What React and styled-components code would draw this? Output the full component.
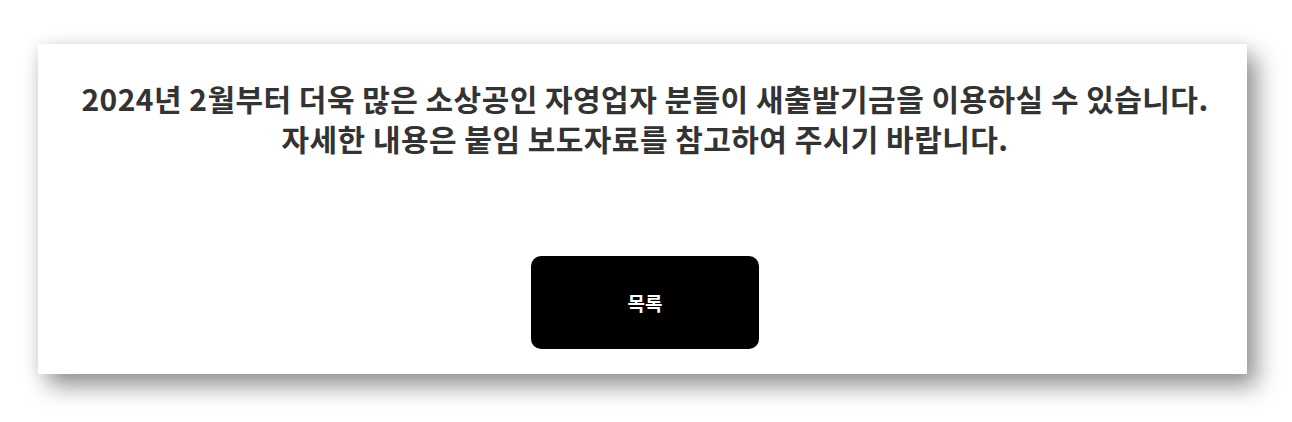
import React from "react";
import styled, { createGlobalStyle } from "styled-components";

const GlobalStyle = createGlobalStyle`
  html, body {
    margin: 0;
    padding: 0;
    background: #ffffff;
  }
  body {
    font-family: "Noto Sans CJK KR", "Noto Sans", sans-serif;
  }
`;

const Page = styled.div`
  width: 1292px;
  height: 422px;
  padding: 44px 0 0 38px;
  box-sizing: border-box;
  overflow: hidden;
`;

const Card = styled.div`
  width: 1209px;
  height: 330px;
  box-sizing: border-box;
  background: #ffffff;
  box-shadow: 10px 12px 22px rgba(0, 0, 0, 0.42), -2px 0 14px rgba(0, 0, 0, 0.08);
  display: flex;
  flex-direction: column;
  align-items: center;
  padding: 34px 0 0 5px;
`;

const Message = styled.p`
  margin: 0;
  font-size: 30px;
  line-height: 40px;
  font-weight: 700;
  color: #333333;
  text-align: center;
  letter-spacing: 0.45px;
`;

const ListButton = styled.button`
  margin-top: 98px;
  width: 228px;
  height: 93px;
  border: none;
  border-radius: 10px;
  background: #000000;
  color: #ffffff;
  font-family: "Noto Sans CJK KR", sans-serif;
  font-size: 19px;
  font-weight: 700;
  cursor: pointer;
`;

export default function App() {
  return (
    <>
      <GlobalStyle />
      <Page>
        <Card>
          <Message>
            2024년 2월부터 더욱 많은 소상공인 자영업자 분들이 새출발기금을 이용하실 수 있습니다.
            <br />
            자세한 내용은 붙임 보도자료를 참고하여 주시기 바랍니다.
          </Message>
          <ListButton>목록</ListButton>
        </Card>
      </Page>
    </>
  );
}
